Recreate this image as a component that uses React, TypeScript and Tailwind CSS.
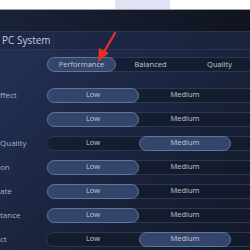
import React from "react";

const font = { fontFamily: '"Open Sans", "Liberation Sans", sans-serif' };

function Track({ selected, labels, seg }: { selected: number; labels: string[]; seg: number }) {
  return (
    <div className="relative ml-[46px] flex h-[15px] w-[300px] items-center rounded-full border border-[#2c3850] bg-[#131a2b]/70">
      {labels.map((l, i) => (
        <div
          key={i}
          className={
            "flex h-[15px] shrink-0 items-center justify-center rounded-full text-[7.5px] text-[#c3c9d3] " +
            (i === selected ? "-my-px border border-[#60769a] bg-[#33456a]" : "")
          }
          style={{ width: seg }}
        >
          {l}
        </div>
      ))}
    </div>
  );
}

function Row({ label, selected }: { label: string; selected: number }) {
  return (
    <div className="relative flex h-[24px] items-center">
      <span className="absolute left-0 text-[8px] text-[#a9b1bf]">{label}</span>
      <Track selected={selected} labels={["Low", "Medium", ""]} seg={92} />
    </div>
  );
}

export default function App() {
  return (
    <div className="relative h-[250px] w-[250px] overflow-hidden bg-gradient-to-br from-[#25345c] via-[#1b2540] to-[#121827]" style={font}>
      <div className="flex h-[10px] border-b border-[#9aa0aa] bg-white">
        <div className="ml-[115px] h-full w-[55px] bg-[#dfe3f3]" />
      </div>
      <div className="h-[21px] bg-gradient-to-r from-[#1a2238] to-[#10141f]" />
      <div className="flex h-[19px] items-center border-y border-[#2b3550] bg-[#1c2540]/60">
        <div className="flex h-full w-[54px] items-center border-r border-[#2b3550] pl-[2px] text-[10px] text-[#c7ccd6]">
          PC System
        </div>
      </div>
      <div className="flex h-[22px] items-end">
        <Track selected={0} labels={["Performance", "Balanced", "Quality"]} seg={69} />
      </div>
      <div className="h-[11px]" />
      <Row label="ffect" selected={0} />
      <Row label="" selected={0} />
      <Row label="Quality" selected={1} />
      <Row label="on" selected={0} />
      <Row label="ate" selected={0} />
      <Row label="tance" selected={0} />
      <Row label="ct" selected={1} />
      <svg className="absolute left-0 top-0" width="250" height="250" viewBox="0 0 250 250">
        <line x1="115" y1="33" x2="104" y2="52" stroke="#e8302a" strokeWidth="2.2" strokeLinecap="round" />
        <polygon points="98,62 99,48 109,53" fill="#e8302a" />
      </svg>
    </div>
  );
}
